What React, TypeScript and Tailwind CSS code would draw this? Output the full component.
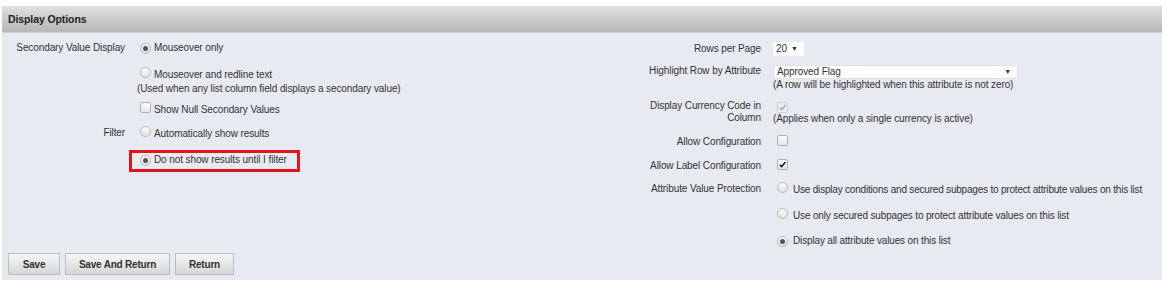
import React from "react";

function Radio({ checked = false }: { checked?: boolean }) {
  return (
    <span className="inline-flex items-center justify-center w-[11px] h-[11px] rounded-full border border-[#b4b4b4] bg-gradient-to-b from-[#fdfdfd] to-[#e2e2e2] shrink-0">
      {checked && <span className="w-[5px] h-[5px] rounded-full bg-[#555]" />}
    </span>
  );
}

function Checkbox({ checked = false, disabled = false }: { checked?: boolean; disabled?: boolean }) {
  return (
    <span
      className={
        "inline-flex items-center justify-center w-[11px] h-[11px] rounded-[2px] border shrink-0 " +
        (disabled ? "border-[#cfcfd4] bg-[#eeeef0]" : "border-[#b0b0b0] bg-gradient-to-b from-[#fdfdfd] to-[#e6e6e6]")
      }
    >
      {checked && (
        <svg width="9" height="9" viewBox="0 0 10 10">
          <path d="M2 5.2 L4.1 7.4 L8.2 2.3" fill="none" stroke={disabled ? "#a9a9ad" : "#111"} strokeWidth="1.7" />
        </svg>
      )}
    </span>
  );
}

function Btn({ children, w }: { children: React.ReactNode; w: string }) {
  return (
    <button
      className={
        "h-[22px] border border-[#bdbdbd] bg-gradient-to-b from-[#f7f7f7] to-[#d6d6d6] text-[10px] tracking-[-0.2px] font-bold text-[#333] flex items-center justify-center " +
        w
      }
    >
      {children}
    </button>
  );
}

export default function App() {
  return (
    <div className="bg-white w-[1167px] h-[287px] pt-[6px] pl-[2px] text-[10px] tracking-[-0.1px] text-[#333]" style={{ fontFamily: '"Liberation Sans", Arial, sans-serif' }}>
      <div className="w-[1160px]">
        <div className="h-[27px] bg-gradient-to-b from-[#e0e0e0] to-[#b7b7b7] border-b border-[#cfd0d8] flex items-center pl-[6px] pt-[1px]">
          <span className="font-bold text-[10.5px] text-[#222]">Display Options</span>
        </div>
        <div className="bg-[#e8eaf2] h-[247px] flex flex-col overflow-hidden">
          <div className="flex whitespace-nowrap">
            {/* Left column */}
            <div className="w-[580px] flex flex-col leading-[14px]">
              <div className="flex mt-[8px]">
                <div className="w-[123px] text-right">Secondary Value Display</div>
                <div className="ml-[12px] flex items-center">
                  <span className="ml-[3px]"><Radio checked /></span>
                  <span className="ml-[3px]">Mouseover only</span>
                </div>
              </div>
              <div className="flex mt-[12px]">
                <div className="w-[123px]" />
                <div className="ml-[12px] flex flex-col">
                  <div className="flex items-center">
                    <span className="ml-[3px]"><Radio /></span>
                    <span className="ml-[3px]">Mouseover and redline text</span>
                  </div>
                  <div>(Used when any list column field displays a secondary value)</div>
                </div>
              </div>
              <div className="flex mt-[6px]">
                <div className="w-[123px]" />
                <div className="ml-[12px] flex items-center">
                  <span className="ml-[3px]"><Checkbox /></span>
                  <span className="ml-[3px]">Show Null Secondary Values</span>
                </div>
              </div>
              <div className="flex mt-[9px]">
                <div className="w-[123px] text-right">Filter</div>
                <div className="ml-[12px] flex items-center">
                  <span className="ml-[3px]"><Radio /></span>
                  <span className="ml-[3px]">Automatically show results</span>
                </div>
              </div>
              <div className="flex mt-[12px]">
                <div className="w-[123px]" />
                <div className="ml-[12px] flex items-center relative">
                  <span className="ml-[3px]"><Radio checked /></span>
                  <span className="ml-[3px]">Do not show results until I filter</span>
                  <span className="absolute left-[-8px] top-[-3px] w-[171px] h-[22px] border-[3px] border-[#e3141d]" />
                </div>
              </div>
            </div>
            {/* Right column */}
            <div className="flex flex-col leading-[14px]">
              <div className="flex mt-[9px]">
                <div className="ml-[61px] w-[118px] text-right">Rows per Page</div>
                <div className="ml-[12px]">
                  <div className="h-[14px] w-[31px] bg-white flex items-center pl-[3px] gap-[4px]">
                    <span>20</span>
                    <span className="text-[7px]">▼</span>
                  </div>
                </div>
              </div>
              <div className="flex mt-[8px]">
                <div className="ml-[61px] w-[118px] text-right">Highlight Row by Attribute</div>
                <div className="ml-[12px] flex flex-col">
                  <div className="h-[14px] w-[245px] bg-white border border-[#e2e2e2] flex items-center justify-between pl-[3px] pr-[6px] mt-[1px]">
                    <span>Approved Flag</span>
                    <span className="text-[7px]">▼</span>
                  </div>
                  <div className="leading-[12px]">(A row will be highlighted when this attribute is not zero)</div>
                </div>
              </div>
              <div className="flex mt-[9px] leading-[12px]">
                <div className="ml-[61px] w-[118px] text-right whitespace-normal pl-[6px]">Display Currency Code in Column</div>
                <div className="ml-[12px] flex flex-col">
                  <div className="h-[12px] flex items-center ml-[4px] mt-[1px]"><Checkbox checked disabled /></div>
                  <div>(Applies when only a single currency is active)</div>
                </div>
              </div>
              <div className="flex mt-[10px]">
                <div className="ml-[61px] w-[118px] text-right">Allow Configuration</div>
                <div className="ml-[12px] flex items-center">
                  <span className="ml-[4px]"><Checkbox /></span>
                </div>
              </div>
              <div className="flex mt-[9px]">
                <div className="ml-[61px] w-[118px] text-right">Allow Label Configuration</div>
                <div className="ml-[12px] flex items-center">
                  <span className="ml-[4px]"><Checkbox checked /></span>
                </div>
              </div>
              <div className="flex mt-[9px]">
                <div className="ml-[61px] w-[118px] text-right">Attribute Value Protection</div>
                <div className="ml-[12px] flex flex-col">
                  <div className="flex items-center">
                    <span className="ml-[4px]"><Radio /></span>
                    <span className="ml-[5px] tracking-[-0.2px]">Use display conditions and secured subpages to protect attribute values on this list</span>
                  </div>
                  <div className="flex items-center mt-[11px]">
                    <span className="ml-[4px]"><Radio /></span>
                    <span className="ml-[5px] tracking-[-0.15px]">Use only secured subpages to protect attribute values on this list</span>
                  </div>
                  <div className="flex items-center mt-[11px]">
                    <span className="ml-[4px]"><Radio checked /></span>
                    <span className="ml-[5px] tracking-[-0.15px]">Display all attribute values on this list</span>
                  </div>
                </div>
              </div>
            </div>
          </div>
          <div className="flex gap-[5px] pl-[6px] mt-[5px]">
            <Btn w="w-[52px]">Save</Btn>
            <Btn w="w-[105px]">Save And Return</Btn>
            <Btn w="w-[59px]">Return</Btn>
          </div>
        </div>
      </div>
    </div>
  );
}
